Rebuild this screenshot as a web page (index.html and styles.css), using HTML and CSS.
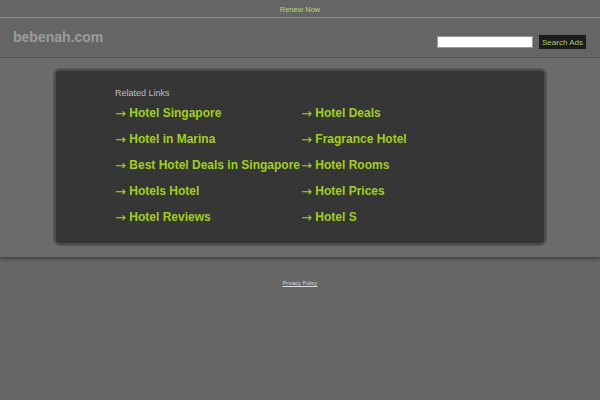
FILE: index.html
```html
<!DOCTYPE html>
<html>
<head>
<meta charset="utf-8">
<link rel="stylesheet" href="styles.css">
</head>
<body>
<div class="topbar"><a class="renew" href="#">Renew Now</a></div>
<div class="header">
  <div class="logo">bebenah.com</div>
  <form class="search">
    <input class="search-input" type="text">
    <button class="search-btn" type="button">Search Ads</button>
  </form>
</div>
<div class="main">
  <div class="box">
    <div class="related">Related Links</div>
    <div class="links">
      <a class="link" href="#"><span class="arrow">&#8594;</span> Hotel Singapore</a>
      <a class="link" href="#"><span class="arrow">&#8594;</span> Hotel Deals</a>
      <a class="link" href="#"><span class="arrow">&#8594;</span> Hotel in Marina</a>
      <a class="link" href="#"><span class="arrow">&#8594;</span> Fragrance Hotel</a>
      <a class="link" href="#"><span class="arrow">&#8594;</span> Best Hotel Deals in Singapore</a>
      <a class="link" href="#"><span class="arrow">&#8594;</span> Hotel Rooms</a>
      <a class="link" href="#"><span class="arrow">&#8594;</span> Hotels Hotel</a>
      <a class="link" href="#"><span class="arrow">&#8594;</span> Hotel Prices</a>
      <a class="link" href="#"><span class="arrow">&#8594;</span> Hotel Reviews</a>
      <a class="link" href="#"><span class="arrow">&#8594;</span> Hotel S</a>
    </div>
  </div>
</div>
<div class="footer"><a class="privacy" href="#">Privacy Policy</a></div>
</body>
</html>
```
FILE: styles.css
```css
html, body {
  margin: 0;
  padding: 0;
  background: #656565;
  font-family: "Liberation Sans", Arial, sans-serif;
  width: 600px;
  height: 400px;
  overflow: hidden;
}
.topbar {
  height: 17px;
  line-height: 14px;
  text-align: center;
  border-bottom: 1px solid #8c8c8c;
}
.renew {
  color: #b9d77a;
  font-size: 7.5px;
  text-decoration: none;
}
.header {
  height: 39px;
  border-bottom: 1px solid #575757;
  display: flex;
  justify-content: space-between;
  align-items: center;
  padding: 0 14px 0 13px;
}
.logo {
  color: #9c9c9c;
  font-size: 14px;
  font-weight: bold;
  margin-top: -2px;
}
.search {
  align-self: flex-end;
  margin: 0 0 8px 0;
  display: flex;
  align-items: center;
  gap: 6px;
}
.search-input {
  width: 96px;
  height: 12px;
  box-sizing: border-box;
  border: 1px solid #999;
  background: #fff;
  padding: 0;
  margin: 0;
}
.search-btn {
  height: 14px;
  width: 47px;
  box-sizing: border-box;
  background: #1c1c1c;
  border: none;
  color: #a9c87a;
  font-family: "Liberation Sans", Arial, sans-serif;
  font-size: 8px;
  padding: 0;
  margin: 0;
}
.main {
  background: #6b6b6b;
  height: 199px;
  padding-top: 11px;
  box-sizing: border-box;
  box-shadow: 0 2px 3px rgba(0, 0, 0, 0.35);
}
.box {
  width: 492px;
  height: 176px;
  box-sizing: border-box;
  margin: 0 auto;
  background: #363636;
  border: 2px solid #4c4c4c;
  border-radius: 6px;
  box-shadow: 0 0 0 1px #5c5c5c;
  padding: 16px 0 0 59px;
}
.related {
  color: #bdbdbd;
  font-size: 9px;
  line-height: 12px;
  height: 12px;
}
.links {
  display: grid;
  grid-template-columns: 186px 186px;
  grid-auto-rows: 26px;
  margin-top: 1px;
}
.link {
  color: #a2cf1e;
  font-size: 12px;
  font-weight: bold;
  line-height: 26px;
  text-decoration: none;
  white-space: nowrap;
}
.arrow {
  font-family: Roboto, "DejaVu Sans", sans-serif;
  font-weight: 500;
  font-size: 13px;
  display: inline-block;
  width: 11px;
  vertical-align: -1px;
}
.footer {
  text-align: center;
  padding-top: 18px;
  line-height: 10px;
}
.privacy {
  color: #dcdcdc;
  font-size: 5.6px;
  text-decoration: underline;
}
```
